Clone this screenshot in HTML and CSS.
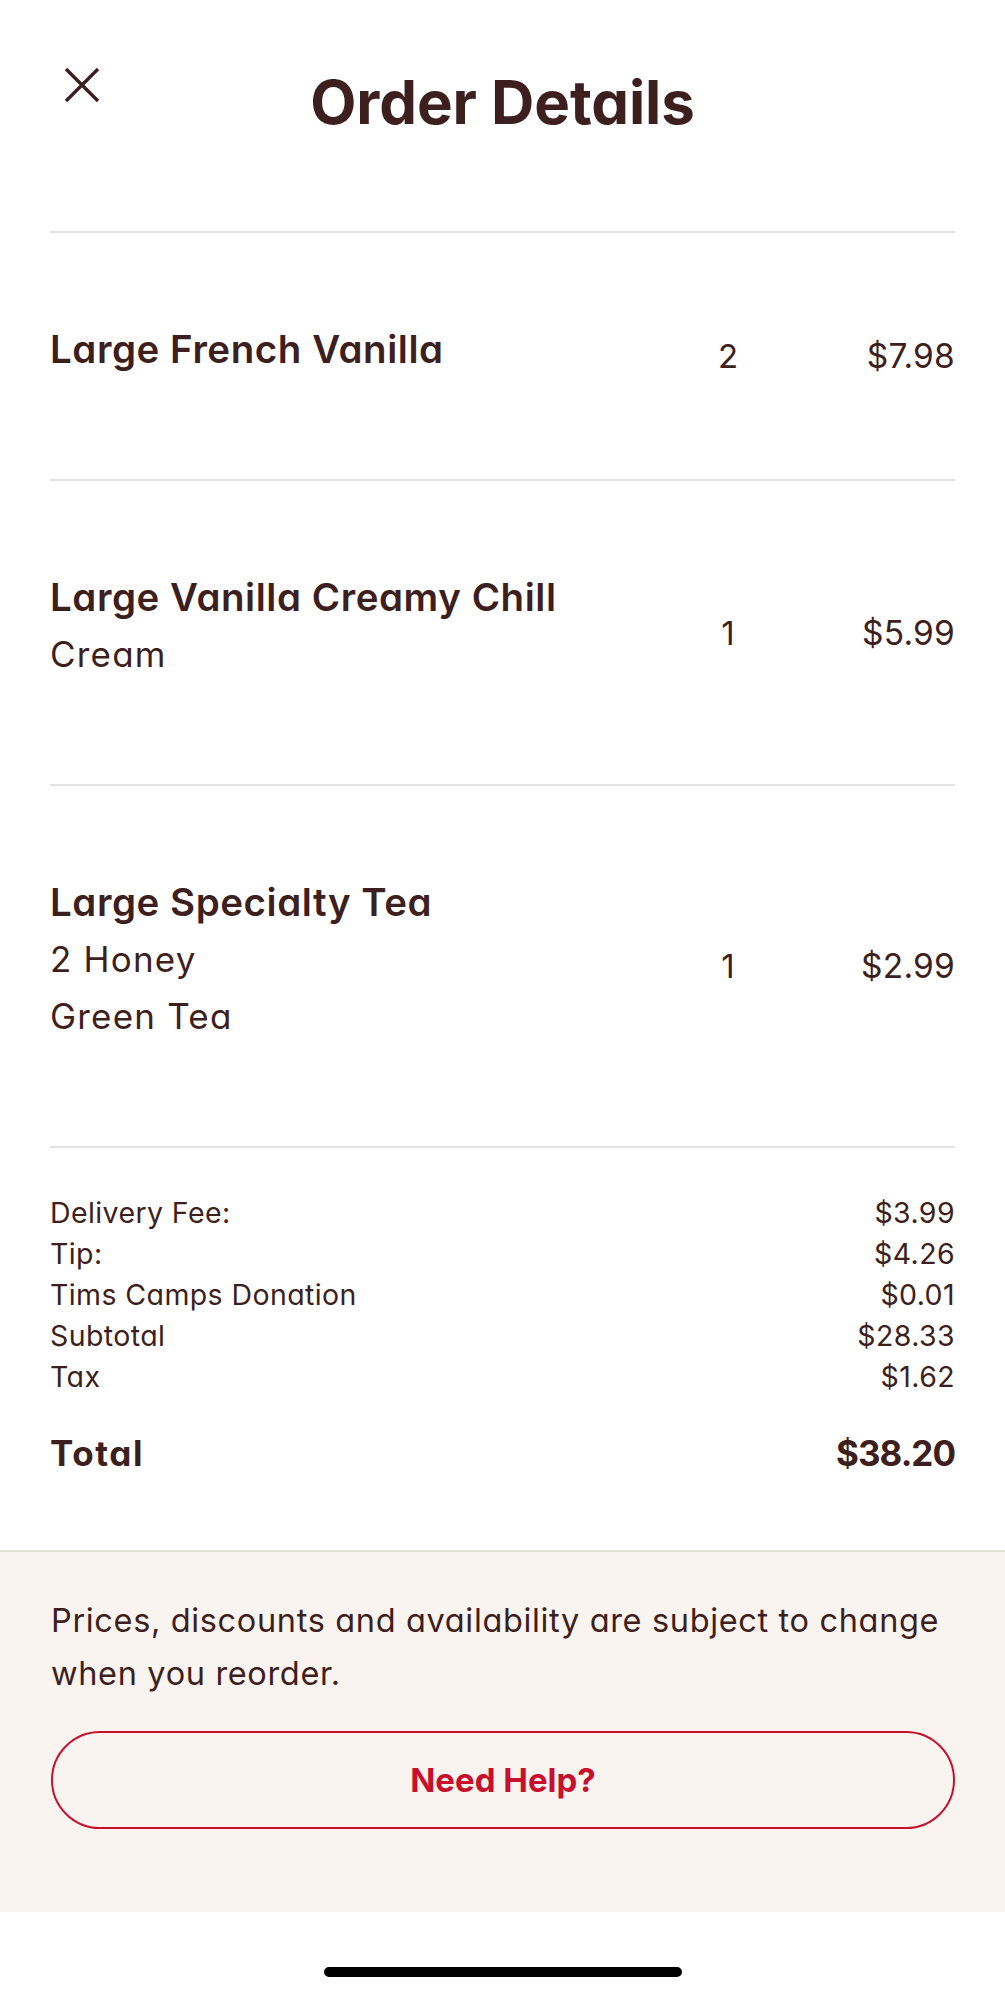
FILE: index.html
```html
<!DOCTYPE html>
<html lang="en">
<head>
<meta charset="utf-8">
<title>Order Details</title>
<link rel="stylesheet" href="styles.css">
</head>
<body>
<div class="page">
  <header class="header">
    <button class="close" aria-label="Close">
      <svg width="36" height="36" viewBox="0 0 36 36" aria-hidden="true">
        <path d="M2 2 L34 34 M34 2 L2 34" stroke="#3d1f20" stroke-width="3.4" fill="none"/>
      </svg>
    </button>
    <h1 class="title">Order Details</h1>
    <div class="spacer"></div>
  </header>

  <section class="items">
    <div class="item">
      <div class="name">
        <div class="item-title">Large French Vanilla</div>
      </div>
      <div class="qty">2</div>
      <div class="price">$7.98</div>
    </div>
    <div class="item">
      <div class="name">
        <div class="item-title">Large Vanilla Creamy Chill</div>
        <div class="item-sub">Cream</div>
      </div>
      <div class="qty">1</div>
      <div class="price">$5.99</div>
    </div>
    <div class="item">
      <div class="name">
        <div class="item-title">Large Specialty Tea</div>
        <div class="item-sub">2 Honey</div>
        <div class="item-sub">Green Tea</div>
      </div>
      <div class="qty">1</div>
      <div class="price">$2.99</div>
    </div>
  </section>

  <section class="summary">
    <div class="fees">
      <div class="fee"><span>Delivery Fee:</span><span>$3.99</span></div>
      <div class="fee"><span>Tip:</span><span>$4.26</span></div>
      <div class="fee"><span>Tims Camps Donation</span><span>$0.01</span></div>
      <div class="fee"><span>Subtotal</span><span>$28.33</span></div>
      <div class="fee"><span>Tax</span><span>$1.62</span></div>
    </div>
    <div class="total"><span class="total-label">Total</span><span class="total-value">$38.20</span></div>
  </section>

  <section class="notice">
    <p class="notice-text">Prices, discounts and availability are subject to change when you reorder.</p>
    <button class="help">Need Help?</button>
  </section>

  <footer class="home">
    <div class="home-bar"></div>
  </footer>
</div>
</body>
</html>
```

FILE: styles.css
```css
* {
  box-sizing: border-box;
}

html, body {
  margin: 0;
  padding: 0;
  background: #ffffff;
}

body {
  font-family: Inter, "Noto Sans", "Liberation Sans", sans-serif;
  font-feature-settings: "cv11";
  color: #3d1f20;
}

.page {
  width: 1005px;
  display: flex;
  flex-direction: column;
}

.header {
  height: 231px;
  padding-top: 66px;
  display: grid;
  grid-template-columns: 1fr auto 1fr;
  align-items: start;
}

.close {
  justify-self: start;
  margin: 1px 0 0 64px;
  padding: 0;
  border: 0;
  background: none;
  width: 36px;
  height: 36px;
  display: block;
}

.close svg {
  display: block;
}

.title {
  margin: 0;
  font-size: 60px;
  line-height: 72px;
  font-weight: 700;
  letter-spacing: -0.1px;
}

.items {
  margin: 0 50px 0 50px;
  display: flex;
  flex-direction: column;
}

.item {
  border-top: 2px solid #e4e1e1;
  padding: 87px 0;
  display: flex;
  align-items: center;
}

.name {
  flex: 1;
  padding-bottom: 14px;
}

.item-title {
  font-size: 38.5px;
  line-height: 58px;
  font-weight: 600;
  letter-spacing: 0.55px;
}

.item-sub {
  font-size: 35px;
  line-height: 57px;
  font-weight: 400;
  letter-spacing: 1.2px;
}

.qty {
  width: 100px;
  text-align: center;
  font-size: 33px;
  line-height: 58px;
}

.price {
  width: 177px;
  text-align: right;
  font-size: 33.5px;
  line-height: 58px;
  letter-spacing: 0.2px;
}

.summary {
  margin: 0 50px 0 50px;
  border-top: 2px solid #e4e1e1;
  padding: 44px 0 73px;
  display: flex;
  flex-direction: column;
  gap: 32px;
}

.fees {
  display: flex;
  flex-direction: column;
}

.fee {
  display: flex;
  justify-content: space-between;
  font-size: 28.5px;
  line-height: 41px;
  font-weight: 400;
  letter-spacing: 0.4px;
}

.total {
  display: flex;
  justify-content: space-between;
  font-size: 35px;
  line-height: 48px;
  font-weight: 700;
}

.total-label {
  letter-spacing: 1.6px;
}

.total-value {
  letter-spacing: -1px;
}

.notice {
  background: #f9f4ef;
  border-top: 2px solid #e3dfdb;
  padding: 42px 50px 83px 51px;
  display: flex;
  flex-direction: column;
  gap: 31px;
}

.notice-text {
  margin: 0;
  font-size: 32.5px;
  line-height: 53px;
  font-weight: 400;
  letter-spacing: 0.65px;
}

.help {
  height: 98px;
  width: 100%;
  border: 2px solid #c8102e;
  border-radius: 49px;
  background: transparent;
  color: #c8102e;
  font-family: Inter, "Noto Sans", "Liberation Sans", sans-serif;
  font-feature-settings: "cv11";
  font-size: 33px;
  font-weight: 700;
  padding: 0;
}

.home {
  height: 87px;
  padding-top: 55px;
  display: flex;
  justify-content: center;
  background: #ffffff;
}

.home-bar {
  width: 358px;
  height: 10px;
  border-radius: 5px;
  background: #000000;
}
```
